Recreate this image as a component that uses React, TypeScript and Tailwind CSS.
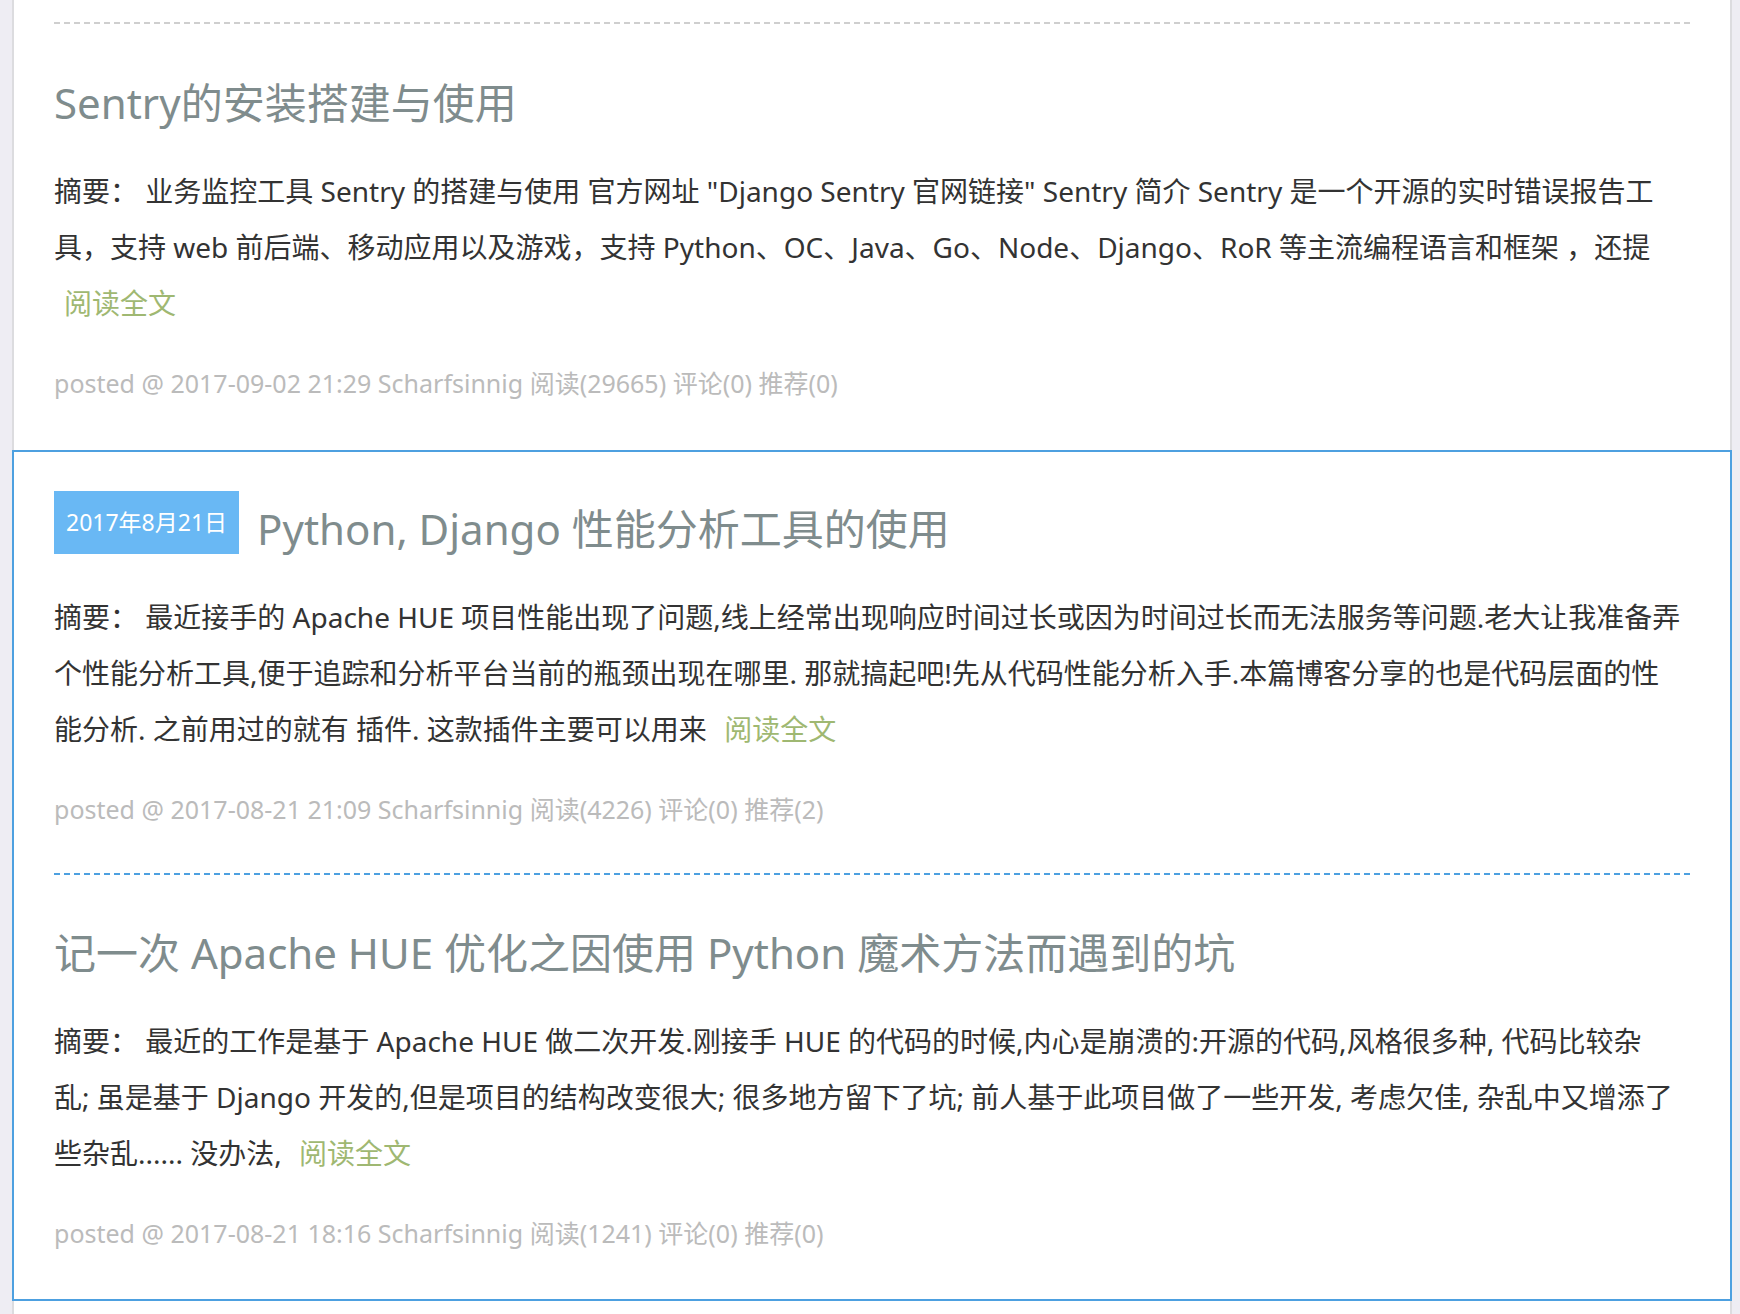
import React from "react";

type Post = {
  title: string;
  // summary text as it wraps in the list view
  lines: string[];
  meta: string;
};

const FONT = { fontFamily: '"Noto Sans", "Noto Sans CJK SC", sans-serif' };

const prevDay: Post[] = [
  {
    title: "Sentry的安装搭建与使用",
    lines: [
      '摘要： 业务监控工具 Sentry 的搭建与使用 官方网址 "Django Sentry 官网链接" Sentry 简介 Sentry 是一个开源的实时错误报告工',
      "具，支持 web 前后端、移动应用以及游戏，支持 Python、OC、Java、Go、Node、Django、RoR 等主流编程语言和框架 ，还提",
    ],
    meta: "posted @ 2017-09-02 21:29 Scharfsinnig 阅读(29665) 评论(0) 推荐(0)",
  },
];

const activeDay: Post[] = [
  {
    title: "Python, Django 性能分析工具的使用",
    lines: [
      "摘要： 最近接手的 Apache HUE 项目性能出现了问题,线上经常出现响应时间过长或因为时间过长而无法服务等问题.老大让我准备弄",
      "个性能分析工具,便于追踪和分析平台当前的瓶颈出现在哪里. 那就搞起吧!先从代码性能分析入手.本篇博客分享的也是代码层面的性",
      "能分析. 之前用过的就有 插件. 这款插件主要可以用来",
    ],
    meta: "posted @ 2017-08-21 21:09 Scharfsinnig 阅读(4226) 评论(0) 推荐(2)",
  },
  {
    title: "记一次 Apache HUE 优化之因使用 Python 魔术方法而遇到的坑",
    lines: [
      "摘要： 最近的工作是基于 Apache HUE 做二次开发.刚接手 HUE 的代码的时候,内心是崩溃的:开源的代码,风格很多种, 代码比较杂",
      "乱; 虽是基于 Django 开发的,但是项目的结构改变很大; 很多地方留下了坑; 前人基于此项目做了一些开发, 考虑欠佳, 杂乱中又增添了",
      "些杂乱...... 没办法,",
    ],
    meta: "posted @ 2017-08-21 18:16 Scharfsinnig 阅读(1241) 评论(0) 推荐(0)",
  },
];

function PostItem({
  post,
  first,
  last,
  date,
  blue,
}: {
  post: Post;
  first?: boolean;
  last?: boolean;
  date?: string;
  blue?: boolean;
}) {
  const box = first
    ? "mx-[40px] pt-[47px] pb-[44px]"
    : blue
      ? "mx-[40px] border-t-2 border-dashed border-[#4da0e0] pt-[48px]"
      : "mx-[40px] border-t-2 border-dashed border-[#cfcfcf] pt-[49px] pb-[47px]";
  return (
    <div className={blue && last ? `${box} pb-[46px]` : box}>
      <div className="flex items-start gap-[18px]">
        {date && (
          <span className="-mt-[8px] flex h-[63px] shrink-0 items-center bg-[#69b8f4] px-[12px] text-[23px] text-white">
            {date}
          </span>
        )}
        <h2 className="text-[42px] leading-[60px] font-normal text-[#7f8c8d]">{post.title}</h2>
      </div>
      <p className="mt-[30px] text-[28px] leading-[56px] text-[#333]">
        {post.lines.map((line, i) => (
          <React.Fragment key={i}>
            {i > 0 && <br />}
            {line}
          </React.Fragment>
        ))}{" "}
        <a className="ml-[10px] inline-block text-[#9fb872]">阅读全文</a>
      </p>
      <p className="mt-[32px] text-[25px] leading-[40px] text-[#bbb]">{post.meta}</p>
    </div>
  );
}

export default function App() {
  return (
    <div className="min-h-screen bg-[#eeedf3]" style={FONT}>
      <div className="ml-[12px] w-[1720px] bg-white">
        <div className="border-x-2 border-[#dcdcdf]">
          <div className="h-[22px]" />
          {prevDay.map((p) => (
            <PostItem key={p.title} post={p} />
          ))}
        </div>
        <div className="border-2 border-[#4da0e0]">
          {activeDay.map((p, i) => (
            <PostItem
              key={p.title}
              post={p}
              first={i === 0}
              last={i === activeDay.length - 1}
              blue
              date={i === 0 ? "2017年8月21日" : undefined}
            />
          ))}
        </div>
        <div className="h-[40px] border-x-2 border-[#dcdcdf]" />
      </div>
    </div>
  );
}
